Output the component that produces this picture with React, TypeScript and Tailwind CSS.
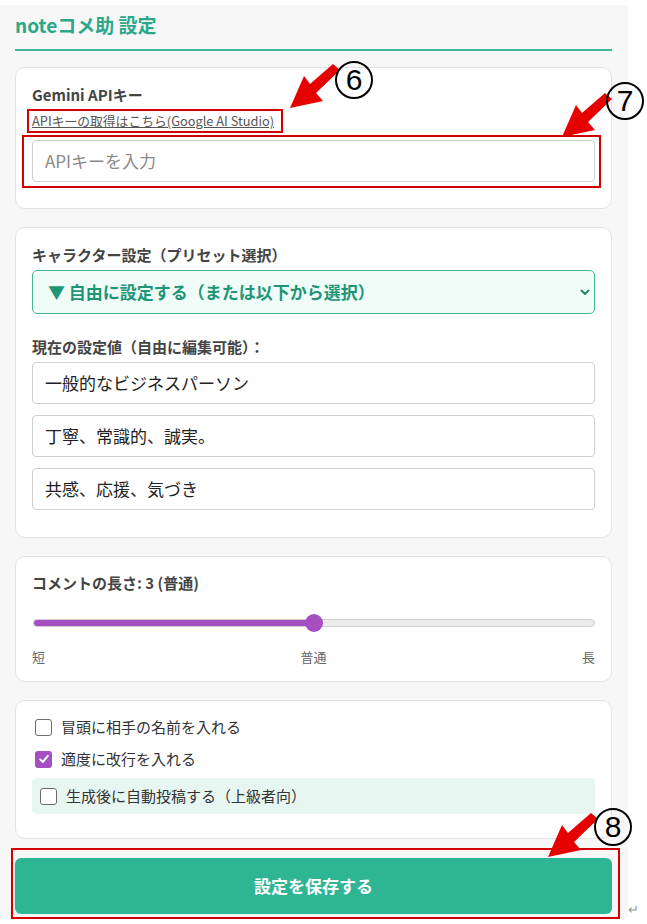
import React from "react";

const font = { fontFamily: '"Noto Sans CJK JP", "Noto Sans", sans-serif' };

// Red callout arrow pointing down-left
function Arrow({ className }: { className: string }) {
  return (
    <svg className={className} width="56" height="48" viewBox="0 0 56 48">
      <polygon fill="#e60000" points="52,6 45,0 22,20 16,12 2,44 35,37 28,29" />
    </svg>
  );
}

// Circled step number
function Step({ n, className }: { n: string; className: string }) {
  return (
    <span
      className={`${className} flex h-[38px] w-[38px] items-center justify-center rounded-full border-2 border-black bg-transparent text-[30px] leading-none text-black`}
      style={{ fontFamily: '"Liberation Sans", Arial, sans-serif' }}
    >
      {n}
    </span>
  );
}

function Checkbox({ checked }: { checked?: boolean }) {
  if (checked) {
    return (
      <span className="flex h-[17px] w-[17px] shrink-0 items-center justify-center rounded-[3px] bg-[#a64fc1]">
        <svg width="12" height="12" viewBox="0 0 12 12">
          <path d="M2.2 6.4 L4.8 9 L9.8 2.8" fill="none" stroke="#fff" strokeWidth="2" strokeLinecap="round" strokeLinejoin="round" />
        </svg>
      </span>
    );
  }
  return <span className="h-[17px] w-[17px] shrink-0 rounded-[3px] border-[1.5px] border-[#6b6b6b] bg-white" />;
}

function TextBox({ value }: { value: string }) {
  return (
    <div className="flex h-[42px] items-center rounded-[4px] border border-[#cfcfcf] bg-white px-[12px] text-[17px] text-[#222]">
      {value}
    </div>
  );
}

function Label({ children }: { children: React.ReactNode }) {
  return <div className="text-[15px] font-bold leading-[22px] text-[#444]">{children}</div>;
}

export default function App() {
  return (
    <div className="relative h-[924px] w-[647px] bg-white pt-[5px]" style={font}>
      <div className="w-[628px] bg-[#f7f7f7] pl-[15px] pr-[16px] pt-[6px] pb-[4px]">
        {/* Header */}
        <div className="border-b-2 border-[#3db696] pb-[10px]">
          <h1 className="text-[19px] font-bold leading-[28px] text-[#2aa888]">noteコメ助 設定</h1>
        </div>

        {/* API key */}
        <section className="mt-[16px] rounded-[10px] border border-[#e2e2e2] bg-white px-[16px] pt-[16px] pb-[26px]">
          <Label>Gemini APIキー</Label>
          <div className="mt-[6px] text-[12.8px] leading-[18px] text-[#555] underline">
            APIキーの取得はこちら(Google AI Studio)
          </div>
          <div className="mt-[10px] flex h-[42px] items-center rounded-[4px] border border-[#cfcfcf] bg-white px-[12px] text-[17px] text-[#8a8a8a]">
            APIキーを入力
          </div>
        </section>

        {/* Character preset */}
        <section className="mt-[18px] rounded-[10px] border border-[#e2e2e2] bg-white px-[16px] pt-[16px] pb-[27px]">
          <Label>キャラクター設定（プリセット選択）</Label>
          <div className="mt-[4px] flex h-[44px] items-center justify-between rounded-[5px] border border-[#45b898] bg-[#effcf8] pl-[15px] pr-[3px]">
            <span className="text-[17px] font-bold text-[#1e9676]">▼ 自由に設定する（または以下から選択）</span>
            <svg width="12" height="12" viewBox="0 0 12 12">
              <path d="M2.5 4.5 L6 8 L9.5 4.5" fill="none" stroke="#1e8a6c" strokeWidth="2" strokeLinecap="round" strokeLinejoin="round" />
            </svg>
          </div>
          <div className="mt-[22px]">
            <Label>現在の設定値（自由に編集可能）：</Label>
          </div>
          <div className="mt-[4px] flex flex-col gap-[11px]">
            <TextBox value="一般的なビジネスパーソン" />
            <TextBox value="丁寧、常識的、誠実。" />
            <TextBox value="共感、応援、気づき" />
          </div>
        </section>

        {/* Comment length */}
        <section className="mt-[18px] rounded-[10px] border border-[#e2e2e2] bg-white px-[16px] pt-[15px] pb-[15px]">
          <Label>コメントの長さ: 3 (普通)</Label>
          <div className="relative mt-[20px] flex h-[18px] items-center pl-[1px]">
            <div className="flex h-[8px] flex-1 overflow-hidden rounded-full border border-[#cfcfcf] bg-[#ececec]">
              <div className="h-full w-1/2 bg-[#a64fc1]" />
            </div>
            <div className="absolute left-[273px] top-0 h-[18px] w-[18px] rounded-full bg-[#a64fc1]" />
          </div>
          <div className="mt-[16px] flex justify-between text-[13px] leading-[18px] text-[#666]">
            <span>短</span>
            <span>普通</span>
            <span>長</span>
          </div>
        </section>

        {/* Options */}
        <section className="mt-[18px] rounded-[10px] border border-[#e2e2e2] bg-white px-[16px] pt-[15px] pb-[24px]">
          <div className="flex flex-col gap-[10px]">
            <label className="flex h-[22px] items-center gap-[9px] pl-[3px] text-[15px] text-[#333]">
              <Checkbox />
              冒頭に相手の名前を入れる
            </label>
            <label className="flex h-[22px] items-center gap-[9px] pl-[3px] text-[15px] text-[#333]">
              <Checkbox checked />
              適度に改行を入れる
            </label>
          </div>
          <label className="mt-[8px] flex h-[36px] items-center gap-[9px] rounded-[4px] bg-[#e8f6f1] pl-[8px] text-[15px] text-[#333]">
            <Checkbox />
            生成後に自動投稿する（上級者向）
          </label>
        </section>

        {/* Save */}
        <button className="mt-[19px] flex h-[56px] w-full items-center justify-center rounded-[6px] bg-[#2db594] text-[17px] font-bold text-white">
          設定を保存する
        </button>
      </div>

      {/* Annotation overlays */}
      <div className="absolute left-[27px] top-[109px] h-[24px] w-[256px] border-2 border-[#d40000]" />
      <div className="absolute left-[22px] top-[135px] h-[53px] w-[579px] border-2 border-[#d40000]" />
      <div className="absolute left-[11px] top-[848px] h-[71px] w-[609px] border-2 border-[#d40000]" />

      <Arrow className="absolute left-[288px] top-[64px]" />
      <Arrow className="absolute left-[560px] top-[93px]" />
      <Arrow className="absolute left-[546px] top-[813px]" />

      <Step n="6" className="absolute left-[335px] top-[61px]" />
      <Step n="7" className="absolute left-[606px] top-[82px]" />
      <Step n="8" className="absolute left-[594px] top-[808px]" />

      <span className="absolute left-[628px] top-[901px] text-[13px] leading-[16px] text-[#999]">↵</span>
    </div>
  );
}
